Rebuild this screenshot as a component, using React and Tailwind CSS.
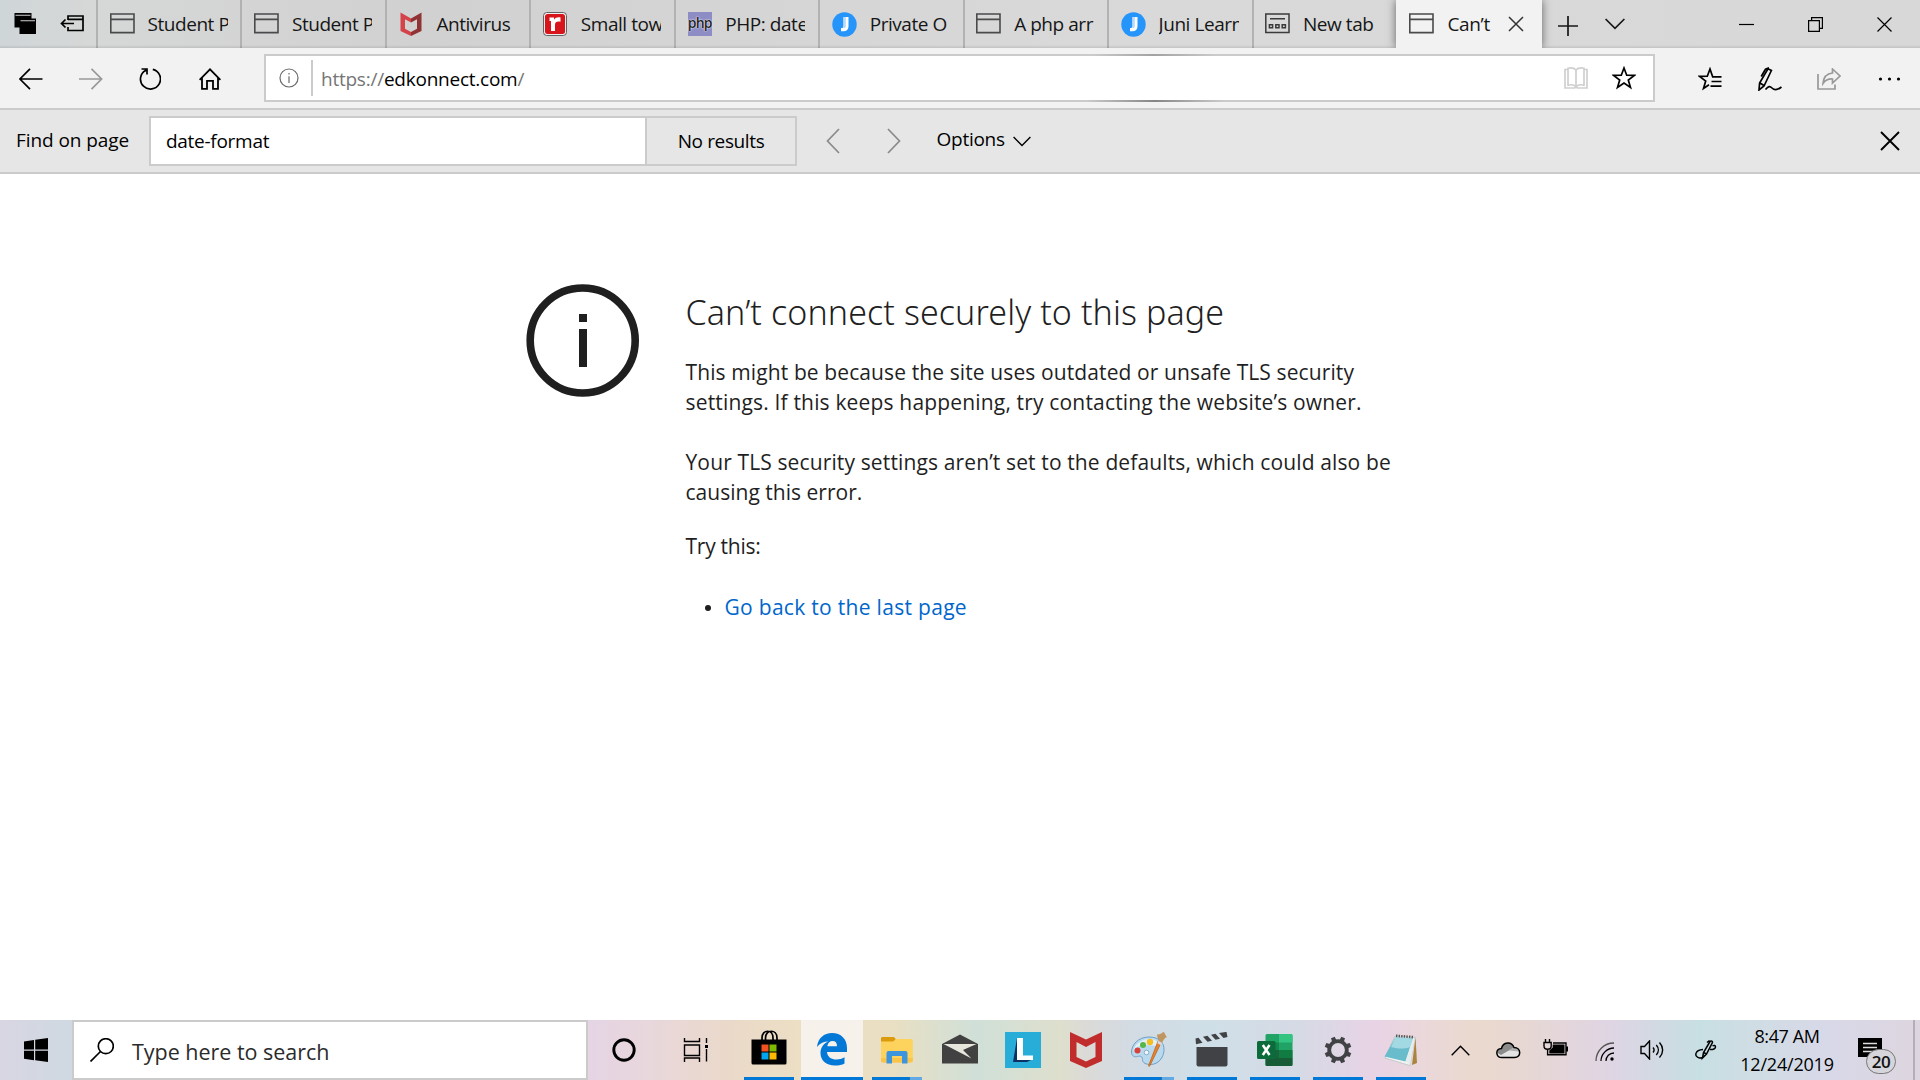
import React from "react";

function Svg({ w, h, box, className = "", children, ...rest }) {
  return (
    <svg
      width={w}
      height={h}
      viewBox={box || `0 0 ${w} ${h}`}
      fill="none"
      stroke="currentColor"
      strokeWidth="1.7"
      className={`shrink-0 ${className}`}
      {...rest}
    >
      {children}
    </svg>
  );
}

/* ---------- tab favicons ---------- */

const PageIcon = () => (
  <Svg w={25} h={21} strokeWidth="1.6" className="-mt-0.5 text-[#4a4a4c]">
    <path d="M.8 1h23.2v18.6H.8zM.8 6.4H24" />
  </Svg>
);

const NewTabIcon = () => (
  <Svg w={25} h={21} strokeWidth="1.5" className="-mt-0.5 text-[#3a3a3c]">
    <path d="M.8 1h23.2v18.6H.8zM5 5.7h15M4.4 11.8h3.2v3H4.4zM10.8 11.8H14v3h-3.2zM17.2 11.8h3.2v3h-3.2z" />
  </Svg>
);

const McAfeeTabIcon = () => (
  <Svg w={22} h={24} stroke="none">
    <path d="M.5.5 11 6.5v4L5 7.2v9.6l6 3.2v4L.5 19z" fill="#d5434a" />
    <path d="M21.5.5 11 6.5v4l6-3.3v9.6L11 20v4l10.5-5z" fill="#8f3335" />
  </Svg>
);

const LetterRIcon = () => (
  <Svg w={24} h={24} stroke="none">
    <rect x=".6" y=".6" width="22.8" height="22.8" rx="3" fill="#fff" stroke="#555" strokeWidth="1" />
    <rect x="2" y="2" width="20" height="20" rx="2.5" fill="#d8151b" />
    <path d="M6.5 5.5h4.5v2.2C12.3 5.500 14.500 5 17.500 5.400v4.400c-3.500-.6-5.500.2-5.500 3V19H8V9H6.500z" fill="#fff" />
  </Svg>
);

const PhpIcon = () => (
  <div className="flex h-6 w-6 shrink-0 items-center justify-center bg-[#8d8cc4] pb-0.5 font-['Open_Sans',sans-serif] text-[14px] leading-none font-semibold tracking-[-0.8px] text-[#222] [text-shadow:0_0_2px_#fff,0_0_1px_#fff]">
    php
  </div>
);

const JuniIcon = () => (
  <Svg w={25} h={25} stroke="none">
    <circle cx="12.5" cy="12.5" r="12.2" fill="#2595fb" />
    <path d="M11.5 5h5v9.500c0 3.200-2 4.800-5 4.800H9v-3.400h1c1.200 0 1.500-.5 1.500-1.700z" fill="#fff" />
    <path d="M11.500 5h2.400v9c0 1.400-.6 2-2.400 2z" fill="#b9dcfd" />
  </Svg>
);

/* ---------- browser chrome ---------- */

const tabs = [
  { label: "Student P", icon: <PageIcon /> },
  { label: "Student P", icon: <PageIcon /> },
  { label: "Antivirus", icon: <McAfeeTabIcon /> },
  { label: "Small tow", icon: <LetterRIcon /> },
  { label: "PHP: date", icon: <PhpIcon /> },
  { label: "Private O", icon: <JuniIcon /> },
  { label: "A php arr", icon: <PageIcon /> },
  { label: "Juni Learn", icon: <JuniIcon /> },
  { label: "New tab", icon: <NewTabIcon /> },
];

function TabBar() {
  return (
    <div className="relative flex h-12 bg-[linear-gradient(90deg,#cfd6d8_0,#d6d7d7_90px,#d1d1d1_420px,#d9d9d9_1100px,#d8d8d8_1920px)] text-[#161616]">
      <div className="flex w-24 shrink-0 items-center">
        <Svg w={24} h={24} className="ml-3.5" stroke="none">
          <path d="M.5 1h17v5.500h4.500V22H5.500v-6.500h-5z" fill="#000" />
          <path d="M1.500 3.300h15M6.500 8.800h14.500" stroke="#d0d0d0" strokeWidth="1.100" />
        </Svg>
        <Svg w={24} h={20} className="ml-[22px] text-black">
          <path d="M8 6V2h15v14.500H8V13M8 5.300h15M1.500 9.500h12.500M5.500 5.500l-4 4 4 4" />
        </Svg>
      </div>
      {tabs.map((t, i) => (
        <div
          key={i}
          className="flex w-[144.44px] shrink-0 items-center border-l-2 border-[#b2b2b2] pl-[11.5px]"
        >
          <div className="flex w-[25px] items-center justify-center">{t.icon}</div>
          <span className="ml-[13px] w-[80px] overflow-hidden text-[19px] leading-[26px] tracking-[-0.45px] whitespace-nowrap">
            {t.label}
          </span>
        </div>
      ))}
      <div className="z-10 flex w-[146.5px] shrink-0 items-center bg-[#f2f2f2] pl-[13.5px] shadow-[0_0_9px_rgba(0,0,0,0.55)] [clip-path:inset(0_-12px_0_-12px)]">
        <PageIcon />
        <span className="ml-[13px] w-[46px] text-[19px] leading-[26px] tracking-[-0.35px] whitespace-nowrap">
          Can’t
        </span>
        <Svg w={16} h={16} className="ml-[15px] text-[#333]" strokeWidth="1.5">
          <path d="M1 1l14 14M15 1L1 15" />
        </Svg>
      </div>
      <div className="flex flex-1 items-center">
        <Svg w={20} h={20} className="mt-1 ml-4">
          <path d="M10 0v20M0 10h20" />
        </Svg>
        <Svg w={20} h={12} className="ml-[27px]">
          <path d="M.6 1L10 10.3 19.4 1" />
        </Svg>
        <Svg w={15} h={15} className="ml-[114px] text-black" strokeWidth="1.2">
          <path d="M0 7.5h15" />
        </Svg>
        <Svg w={15} h={15} className="ml-[54px] text-black" strokeWidth="1.2">
          <path d="M.6 3.6h10.800v10.800H.6zM3.600 3.600v-3h10.800v10.800h-3" />
        </Svg>
        <Svg w={15} h={15} className="ml-[54px] text-black" strokeWidth="1.2">
          <path d="M.5.5l14 14M14.5.5l-14 14" />
        </Svg>
      </div>
      <div className="pointer-events-none absolute inset-x-0 bottom-0 h-[3px] bg-linear-to-b from-transparent to-black/10" />
    </div>
  );
}

function AddressBar() {
  return (
    <div className="flex h-[62px] items-start border-b-2 border-[#cbcbcb] bg-[#f2f2f2] text-black">
      <div className="flex h-[61px] w-[264px] shrink-0 items-center">
        <Svg w={24} h={22} className="ml-[19px]">
          <path d="M23.5 11H1M11 .8L.9 11 11 21.2" />
        </Svg>
        <Svg w={24} h={22} className="ml-9 text-[#999]">
          <path d="M0 11h22.500M12.500.8L22.600 11l-10.100 10.200" />
        </Svg>
        <Svg w={22} h={22} className="ml-9">
          <path d="M13.800 1.300a10 10 0 1 1-7.400 1.100M2.500 1h5.500v5.500M7.600 1.600L6 3" />
        </Svg>
        <Svg w={22} h={22} className="ml-[38px]" strokeWidth="1.8">
          <path d="M.6 11.800L11 1.300l10.400 10.500M3 9.500v11.400h5v-8h6v8h5V9.500" />
        </Svg>
      </div>
      <div className="relative mt-1.5 flex h-12 w-[1391px] shrink-0 items-center border-2 border-[#cbcbcb] bg-white">
        <Svg w={20} h={20} className="ml-[12.5px] text-[#6b6b6b]" strokeWidth="1.2">
          <circle cx="10" cy="10" r="9" />
          <path d="M10 8.300v6.700M10 5v1.600" />
        </Svg>
        <div className="ml-[12.5px] h-9 w-0.5 bg-[#cbcbcb]" />
        <span className="mt-0.5 ml-[8px] text-[19px] leading-[26px] tracking-[-0.24px] text-[#757575]">
          https://<span className="text-black">edkonnect.com</span>/
        </span>
        <Svg w={24} h={22} className="ml-auto text-[#cfcfcf]">
          <path d="M4 2.500H1V21h9.500l1.500-1 1.500 1H23V2.500h-3M12 3v16M12 3C10 .8 7 .5 4 1.300V18.200c3-.8 6-.5 8 1.300 2-1.800 5-2.100 8-1.300V1.300C17 .5 14 .8 12 3z" />
        </Svg>
        <Svg w={24} h={24} className="mr-[17px] ml-[24.5px]">
          <path d="M12 2l2.700 7.200 7.700.2-6.100 4.600 2.200 7.400L12 17.100l-6.500 4.300 2.200-7.400-6.100-4.600 7.700-.2z" />
        </Svg>
        <div className="absolute -top-0.5 left-[826px] h-0.5 w-[124px] bg-linear-to-r from-transparent via-[#a2a2a2] to-transparent" />
        <div className="absolute -bottom-0.5 left-[820px] h-0.5 w-[138px] bg-linear-to-r from-transparent via-[#868686] to-transparent" />
      </div>
      <div className="flex h-[61px] flex-1 items-center">
        <Svg w={24} h={24} className="ml-[43px]">
          <path d="M23.500 9.800h-8.800L12 2 9.300 9.200l-7.700.2 6.100 4.600-2.200 7.400 5.500-3.700M13.500 14.500h10M12.500 19.200h11" />
        </Svg>
        <Svg w={24} h={24} className="ml-9">
          <path d="M1 23l.6-7L10 1.800l3.400 1.700L6 19zM2 16l3.500 2.300M3.200 9.500L7.500 2.200 11 .8M7.500 22.500c3-3.500 4.500-3.500 6.500-1.500 2.500 2.500 5 2.500 9.500-1" />
        </Svg>
        <Svg w={24} h={22} className="ml-[35px] text-[#999]">
          <path d="M1 6v15h17v-4.500M15.500 1l7.500 7-7.500 7v-4c-4-.3-7 1-9.500 4.500C6.500 9 10 5.500 15.500 5z" />
        </Svg>
        <Svg w={24} h={6} className="ml-[37px]" stroke="none">
          <g fill="currentColor">
            <circle cx="2.5" cy="3" r="1.6" />
            <circle cx="11.5" cy="3" r="1.6" />
            <circle cx="20.5" cy="3" r="1.6" />
          </g>
        </Svg>
      </div>
    </div>
  );
}

function FindBar() {
  return (
    <div className="flex h-16 items-center border-b-2 border-[#cbcbcb] bg-[#e6e6e6] text-[19px] leading-[26px] text-black">
      <span className="-mt-0.5 ml-4 w-[133px] shrink-0 tracking-[-0.08px]">Find on page</span>
      <div className="flex h-[50px] w-[648px] shrink-0 border-2 border-[#cbcbcb]">
        <div className="flex flex-1 items-center bg-white pl-[15px] tracking-[-0.28px]">date-format</div>
        <div className="flex w-[150px] items-center justify-center border-l-2 border-[#cbcbcb] tracking-[-0.38px]">
          No results
        </div>
      </div>
      <Svg w={14} h={26} className="ml-[28.5px] text-[#8a8a8a]">
        <path d="M13 1L1.500 13 13 25" />
      </Svg>
      <Svg w={14} h={26} className="ml-[47px] text-[#8a8a8a]">
        <path d="M1 1l11.500 12L1 25" />
      </Svg>
      <span className="ml-9 pb-[5px] tracking-[-0.26px]">Options</span>
      <Svg w={18} h={11} className="ml-[8px]" strokeWidth="1.4">
        <path d="M.6 1L9 9.600 17.400 1" />
      </Svg>
      <Svg w={20} h={20} className="mr-5 ml-auto" strokeWidth="1.9">
        <path d="M1 1l18 18M19 1L1 19" />
      </Svg>
    </div>
  );
}

/* ---------- page ---------- */

function ErrorPage() {
  return (
    <main className="flex flex-1 items-start bg-white pt-[110px] pl-[526px] text-[#1f1f1f]">
      <Svg w={114} h={114} stroke="none">
        <circle cx="56.7" cy="56.5" r="52.5" stroke="#1f1f1f" strokeWidth="7.6" />
        <path d="M53 30h8v8h-8zM53 45h8v38h-8z" fill="#1f1f1f" />
      </Svg>
      <div className="ml-[45.5px] text-[21px] leading-[30px]">
        <h1 className="mt-[5px] font-['Noto_Sans','Open_Sans',sans-serif] text-[34px] leading-[46px] font-light tracking-[0.1px]">
          Can’t connect securely to this page
        </h1>
        <p className="mt-[22px] tracking-[0.11px]">
          This might be because the site uses outdated or unsafe TLS security
          <br />
          <span className="tracking-[0.17px]">
            settings. If this keeps happening, try contacting the website’s owner.
          </span>
        </p>
        <p className="mt-[30px] tracking-[0.13px]">
          Your TLS security settings aren’t set to the defaults, which could also be
          <br />
          <span className="tracking-[0.02px]">causing this error.</span>
        </p>
        <p className="mt-6 tracking-[-0.25px]">Try this:</p>
        <ul className="mt-[31px] pl-[19.5px]">
          <li className="flex items-center">
            <span className="mt-0.5 mr-[13.5px] h-1.5 w-1.5 rounded-full bg-[#1f1f1f]" />
            <a className="tracking-[0.3px] text-[#0066cc]">Go back to the last page</a>
          </li>
        </ul>
      </div>
    </main>
  );
}

/* ---------- taskbar app icons ---------- */

const StoreIcon = () => (
  <Svg w={36} h={36} className="-mt-1" stroke="none">
    <path d="M11 10V8c0-9 11-9 11 0v2M14.500 10V8c0-9 11.500-9 11.500 0v2" stroke="#000" strokeWidth="1.7" />
    <path d="M.5 9.500h35V33a1.500 1.500 0 0 1-1.500 1.500H2A1.500 1.500 0 0 1 .5 33z" fill="#000" />
    <path d="M10.500 14.500h7v7h-7z" fill="#f25022" />
    <path d="M18.500 14.500h7v7h-7z" fill="#7fba00" />
    <path d="M10.500 22.500h7v7h-7z" fill="#00a4ef" />
    <path d="M18.500 22.500h7v7h-7z" fill="#ffb900" />
  </Svg>
);

const EdgeIcon = () => (
  <Svg w={32} h={34} className="-mt-0.5" stroke="none">
    <path
      d="M1 15C2 6 8 1 16 1c9 0 15 6 15 15v4H11c.3 5 4.500 7.500 9.500 7.500 3 0 5.500-.8 8-2.200v6.200C26 33 23 33.500 19 33.500 10 33.500 4.500 28.500 4.500 21c0-5.500 3-9.500 8-11.500C8 9.500 4 11.300 1 15zm10.300-.8H21c0-3.300-1.500-5.200-4.500-5.200-2.800 0-4.700 2-5.200 5.200z"
      fill="#0478d7"
    />
  </Svg>
);

const FolderIcon = () => (
  <Svg w={34} h={28} stroke="none">
    <path d="M1 2.500C1 1.500 1.500 1 2.500 1H14l2 2.500L14 6H1z" fill="#dc9a0d" />
    <path d="M1 5.500h12l3-2.500h15c1.200 0 1.800.6 1.800 1.800v20c0 1-.8 1.700-1.800 1.700H3c-1.200 0-2-.7-2-1.700z" fill="#fdd35e" />
    <path d="M1 22h31.800v2.800c0 1-.8 1.700-1.800 1.700H3c-1.200 0-2-.7-2-1.700z" fill="#f9c44a" />
    <path d="M6.500 27.500V17a2 2 0 0 1 2-2h17a2 2 0 0 1 2 2v10.500h-5.500V20H12v7.500z" fill="#3d96dd" />
  </Svg>
);

const MailIcon = () => (
  <Svg w={36} h={30} stroke="none" className="-mt-0.5">
    <path d="M0 10L18 .5 36 10v19.500H0z" fill="#414141" />
    <path d="M1.500 10h33L21 16l8.500 8.500z" fill="#e7e6dc" />
  </Svg>
);

const LIcon = () => (
  <Svg w={36} h={36} stroke="none">
    <path d="M0 0h36v36H0z" fill="#28add8" />
    <path d="M12 6L8 30h14l6-3-16-1z" fill="#0a3265" />
    <path d="M12 6h6v17.500h10V28H12z" fill="#fff" />
  </Svg>
);

const McAfeeIcon = () => (
  <Svg w={32} h={36} stroke="none">
    <path d="M0 0l16 7.500L32 0v29l-16 7-16-7zM6.500 10v15L16 29.500l9.500-4.500V10L16 15z" fill="#c12c2d" fillRule="evenodd" />
  </Svg>
);

const PaintIcon = () => (
  <Svg w={36} h={36} stroke="none">
    <path
      d="M18 5C7 5 .5 13 .5 20c0 4 3 5.500 6 4.500 3-1 5 0 5 3 0 3.500 3.500 5 8 5 8 0 13-7 13.500-14C33.500 10 27.500 5 18 5z"
      fill="#b9d9ef"
      stroke="#6f9fc5"
      strokeWidth="1"
    />
    <path d="M17 7C9 8 3.500 13 2.500 19c5-7 13-7 27-4-1.500-6-6.500-8.500-12.500-8z" fill="#e2f0fa" />
    <circle cx="6.5" cy="18.5" r="3" fill="#d7413a" />
    <circle cx="12" cy="13" r="3" fill="#58b647" />
    <circle cx="19" cy="10" r="3.2" fill="#f5bf20" />
    <circle cx="15.5" cy="20.5" r="2.3" fill="#f1f7fb" stroke="#789fbd" strokeWidth=".8" />
    <path d="M30.500 10L19 33.500c-1 1.500-1.500 1-1.200-.5L27 9z" fill="#e98328" stroke="#b95a17" strokeWidth=".7" />
    <path d="M28 9.500c-.5-3-2-4-2-7 3 .5 5-2 7-2.500 1 2 2 4.500 3 5-3 1-4 4-5 6z" fill="#bf9560" />
    <path d="M27 8.500l4.500 2.500-1 2.500-4-2z" fill="#d7d7d7" />
  </Svg>
);

const ClapperIcon = () => (
  <Svg w={34} h={36} stroke="none">
    <path d="M1.500 15h31v17.500a2 2 0 0 1-2 2h-27a2 2 0 0 1-2-2z" fill="#404245" />
    <path d="M.5 6.500l3-.7 4 5-6.500 1.500zM8 4.700l4.500-1 4.500 5-4.500 1zM16 2.800l4.500-1 4.500 5-4.500 1zM24 .9l7.500-1 1 5-4 1z" fill="#404245" />
  </Svg>
);

const ExcelIcon = () => (
  <Svg w={36} h={34} stroke="none">
    <path d="M8.500 2.500A1.500 1.500 0 0 1 10 1h24a1.500 1.500 0 0 1 1.500 1.500V32h-27z" fill="#21a366" />
    <path d="M22 1h12a1.500 1.500 0 0 1 1.500 1.500v7H22z" fill="#33c481" />
    <path d="M8.500 9.500H22V17H8.500z" fill="#13874e" />
    <path d="M22 17h13.500v8H22z" fill="#107c41" />
    <path d="M8.500 25h27v7a1 1 0 0 1-1 1h-25a1 1 0 0 1-1-1z" fill="#185c37" />
    <path d="M8.500 17H22v8H8.500z" fill="#16653c" />
    <path d="M1.500 8h15.500A1.500 1.500 0 0 1 18.500 9.500v15a1.500 1.500 0 0 1-1.500 1.500H1.500A1.500 1.500 0 0 1 0 24.500v-15A1.500 1.500 0 0 1 1.500 8z" fill="#0c6b3a" />
    <path d="M5.800 12l6.700 10M12.500 12L5.800 22" stroke="#fff" strokeWidth="2.5" />
  </Svg>
);

const GearIcon = () => (
  <Svg w={28} h={28} box="-14 -14 28 28" className="text-[#404245]">
    <circle r="8.8" strokeWidth="3.8" />
    {[0, 45, 90, 135, 180, 225, 270, 315].map((a) => (
      <path key={a} d="M-2.400-9l.4-4.500h4l.4 4.500z" transform={`rotate(${a + 22.5})`} fill="currentColor" stroke="none" />
    ))}
  </Svg>
);

const NotepadIcon = () => (
  <Svg w={36} h={34} stroke="none">
    <path d="M32.500 4l1.500 26-5 2z" fill="#a9843f" />
    <path d="M12 3L32 4.500 27 32.500 2 25z" fill="#f3f5f3" stroke="#a8b8ba" strokeWidth=".6" />
    <path d="M12.500 4L30 5.500 22.500 28.500 1.500 23.500z" fill="#69bccb" />
    <path d="M12.500 4L30 5.500l-2.500 8.500C19 17 12 15 8 14z" fill="#a3d9e2" />
    <path d="M22.500 28.500L30 5.500l1.800.2L27 32z" fill="#e5ecec" />
    <path d="M13 2.800l18 1.400" stroke="#555" strokeWidth="2.6" strokeDasharray="1.4 1.2" />
  </Svg>
);

const apps = [
  { icon: <StoreIcon />, run: "one" },
  { icon: <EdgeIcon />, run: "active" },
  { icon: <FolderIcon />, run: "many" },
  { icon: <MailIcon /> },
  { icon: <LIcon /> },
  { icon: <McAfeeIcon /> },
  { icon: <PaintIcon />, run: "many" },
  { icon: <ClapperIcon />, run: "one" },
  { icon: <ExcelIcon />, run: "one" },
  { icon: <GearIcon />, run: "one" },
  { icon: <NotepadIcon />, run: "one" },
];

function AppButton({ icon, run }) {
  return (
    <div
      className={
        run === "active"
          ? "relative mr-0.5 ml-px flex w-[62px] shrink-0 items-center justify-center bg-[#f6f1ea]"
          : "relative flex w-[63px] shrink-0 items-center justify-center"
      }
    >
      {icon}
      {run === "active" && <div className="absolute inset-x-0 bottom-0 h-[3px] bg-[#0078d7]" />}
      {run === "one" && <div className="absolute bottom-0 h-[3px] w-[50px] bg-[#0078d7]" />}
      {run === "many" && (
        <div className="absolute bottom-0 flex h-[3px] w-[50px] bg-[#62a9e3]">
          <div className="w-[38px] border-r border-[#2b73b0] bg-[#0078d7]" />
        </div>
      )}
    </div>
  );
}

function Taskbar() {
  return (
    <footer className="flex h-[60px] shrink-0 bg-[linear-gradient(90deg,#d8d6e2_0,#cfd9e2_72px,#e5d4e4_588px,#e8d7db_650px,#ead9c9_730px,#ecdfc4_800px,#eadfc2_890px,#d0e0d8_975px,#dedfcd_1060px,#dbdad7_1085px,#d3dbe3_1130px,#cfdfe8_1210px,#d6dae5_1300px,#e8d3e5_1375px,#ead8da_1425px,#ead9cd_1480px,#e4d6da_1560px,#dfd5e3_1610px,#d2d9e3_1655px,#c7dfe3_1700px,#cfdde4_1750px,#d8d8e8_1830px,#ddd6e0_1910px)] text-black">
      <div className="flex w-[72px] shrink-0 items-center justify-center">
        <Svg w={24} h={24} stroke="none">
          <path d="M0 3.400l10-1.400v9.500H0zM11.200 1.800L24 0v11.500H11.200zM0 12.700h10v9.500L0 20.800zM11.200 12.700H24V24l-12.800-1.700z" fill="#000" />
        </Svg>
      </div>
      <div className="flex w-[516px] shrink-0 items-center border-2 border-[#cbcbcb] bg-white">
        <Svg w={24} h={24} className="ml-[16px]" strokeWidth="1.7">
          <circle cx="15.8" cy="8.2" r="7.5" />
          <path d="M10.500 13.500L.5 23.500" />
        </Svg>
        <span className="mt-[3px] ml-[18px] text-[21.5px] leading-[30px] tracking-[-0.02px] text-[#2b2b2b]">
          Type here to search
        </span>
      </div>
      <div className="flex w-[72px] shrink-0 items-center justify-center">
        <Svg w={26} h={26}>
          <circle cx="13" cy="13" r="10.2" strokeWidth="2.9" />
        </Svg>
      </div>
      <div className="mr-[5px] flex w-[72px] shrink-0 items-center justify-center">
        <Svg w={26} h={24} strokeWidth="1.4">
          <path d="M1.500 0v3.500h15V0M1.500 24v-4h15v4M1.500 7h15v10.500h-15zM23.500 0v5M23.500 11v12.500" />
          <path d="M22 7h3v3h-3z" fill="currentColor" stroke="none" />
        </Svg>
      </div>
      {apps.map((a, i) => (
        <AppButton key={i} {...a} />
      ))}
      <div className="flex flex-1 items-center">
        <Svg w={19} h={11} className="ml-[18.5px]" strokeWidth="1.4">
          <path d="M.7 10.300L9.500 1.200l8.800 9.100" />
        </Svg>
        <Svg w={25} h={18} className="ml-[26px]" stroke="none">
          <path d="M6 16.500c-6.500 0-7-8.500-.5-9C7 .5 15.500 0 18 6.500c7.500 0 7.500 10 .5 10z" fill="#e4e4e4" />
          <path d="M1.500 12c0-3 2-4.500 4-4.500C7 .5 15.500 0 18 6.500L5 14z" fill="#8b8b8b" />
          <path d="M12.500 9.500L18 6.500c3 0 5 1.500 5.300 4z" fill="#b0b0b0" />
          <path d="M6 16.500c-6.500 0-7-8.500-.5-9C7 .5 15.500 0 18 6.500c7.500 0 7.500 10 .5 10z" stroke="#000" strokeWidth="1.5" />
        </Svg>
        <Svg w={25} h={18} className="-mt-1 ml-[22.5px]" strokeWidth="1.4">
          <path d="M2.500 0v3.500M6.500 0v3.500M1 3.500h7.200V7C8.200 9 7 10.200 4.600 10.200S1 9 1 7zM4.600 10v5.800H23V4H10M24.300 7.500v5" />
          <path d="M6.300 11.600L9.700 8.500V5.500h11.800v8.900H6.300z" fill="currentColor" stroke="none" />
        </Svg>
        <Svg w={20} h={20} className="mt-[3px] ml-[26.5px]" strokeWidth="1.3">
          <path d="M1 19C1 9 9 1 19 1" stroke="#555" />
          <path d="M6 19C6 12 12 6 19 6M11 19c0-4.500 3.500-8 8-8" />
          <circle cx="17" cy="17" r="1.7" fill="currentColor" stroke="none" />
        </Svg>
        <Svg w={24} h={20} className="ml-[25px]" strokeWidth="1.4">
          <path d="M1 6.500h3.500L9.500 1v18l-5-5.500H1zM13 7.500c1.300 1.500 1.300 3.500 0 5M16.300 5c2.700 3 2.700 7 0 10M19.500 2.500c4.200 4.500 4.200 10.500 0 15" />
        </Svg>
        <Svg w={22} h={22} className="ml-[31px]" strokeWidth="1.5">
          <path d="M7.500 19l1-5.500L15 2.500c1-1.300 3 0 2.300 1.300L11.500 15zM8.500 13.500l3 1.500M8 10.500c-8 .5-9.500 7-3.500 8.500 2.500.3 4-.5 5.500-2.500M15 10.500c3 .5 5.500-1 5.500-2.500S19 6 17.500 7M12 3.500l2.500-2" />
        </Svg>
        <div className="ml-[20.5px] flex w-[100px] flex-col items-center text-[18px] leading-7">
          <span className="tracking-[-0.4px]">8:47 AM</span>
          <span className="tracking-[-0.2px]">12/24/2019</span>
        </div>
        <div className="relative ml-auto flex h-full w-[55px] items-center">
          <Svg w={24} h={24} stroke="none">
            <path d="M0 0h24v19h-9.500l-5 5v-5H0z" fill="#000" />
            <path d="M5 5.500h14M5 9.500h14M5 13.500h14" stroke="#ddd" strokeWidth="1.3" />
          </Svg>
          <div className="absolute top-[29px] left-[8px] flex h-[25px] w-[30px] items-center justify-center rounded-full border border-[#777] bg-[#d5d5db] text-[17px] leading-none font-semibold tracking-[-0.5px] text-[#111]">
            20
          </div>
        </div>
        <div className="mr-[5px] h-full w-0.5 bg-[#b3b0b5]" />
      </div>
    </footer>
  );
}

export default function App() {
  return (
    <div className="flex h-[1080px] w-[1920px] flex-col overflow-hidden bg-white font-['Open_Sans','Noto_Sans',sans-serif]">
      <TabBar />
      <AddressBar />
      <FindBar />
      <ErrorPage />
      <Taskbar />
    </div>
  );
}
